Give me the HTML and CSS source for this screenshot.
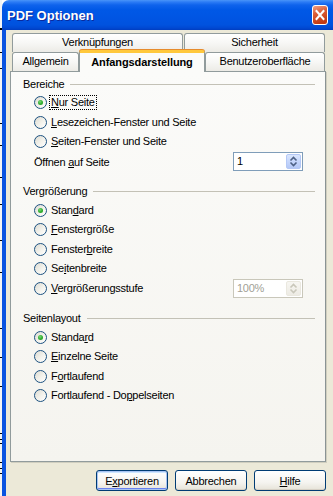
FILE: index.html
```html
<!DOCTYPE html>
<html lang="de">
<head>
<meta charset="utf-8">
<title>PDF Optionen</title>
<link rel="stylesheet" href="styles.css">
</head>
<body>
<div class="screen">
  <div class="backdrop"></div>
  <div class="window">
    <div class="titlebar">
      <span class="title">PDF Optionen</span>
      <span class="close">
        <svg width="16" height="20" viewBox="0 0 16 20">
          <defs>
            <linearGradient id="cg" x1="0" y1="0" x2="0.3" y2="1">
              <stop offset="0" stop-color="#F0A68C"/>
              <stop offset="0.45" stop-color="#DC5E38"/>
              <stop offset="1" stop-color="#C23A12"/>
            </linearGradient>
          </defs>
          <rect x="0.5" y="0.5" width="15" height="19" rx="2.5" fill="url(#cg)" stroke="#FFFFFF"/>
          <path d="M4.5 6 L11.5 14 M11.5 6 L4.5 14" stroke="#FFFFFF" stroke-width="2" stroke-linecap="square"/>
        </svg>
      </span>
    </div>
    <div class="frame">
      <div class="client">
        <div class="tabs">
          <div class="tabrow tabrow-top">
            <div class="tab tab-links">Verknüpfungen</div>
            <div class="tab tab-security">Sicherheit</div>
          </div>
          <div class="tabrow tabrow-bottom">
            <div class="tab tab-general">Allgemein</div>
            <div class="tab tab-initial active">Anfangsdarstellung</div>
            <div class="tab tab-ui">Benutzeroberfläche</div>
          </div>
        </div>
        <div class="panel">
          <div class="group">
            <div class="legend"><span>Bereiche</span><i class="rule"></i></div>
            <div class="row"><span class="radio on"></span><span class="label focus"><u>N</u>ur Seite</span></div>
            <div class="row"><span class="radio"></span><span class="label"><u>L</u>esezeichen-Fenster und Seite</span></div>
            <div class="row"><span class="radio"></span><span class="label"><u>S</u>eiten-Fenster und Seite</span></div>
            <div class="row row-field">
              <span class="plain">Öffnen <u>a</u>uf Seite</span>
              <span class="spin"><span class="spin-value">1</span><span class="spin-btn"><svg width="9" height="11" viewBox="0 0 9 11"><path d="M1.5 4.5 L4.5 1.5 L7.5 4.5 M1.5 6.5 L4.5 9.5 L7.5 6.5" fill="none" stroke="#4D6185" stroke-width="1.6"/></svg></span></span>
            </div>
          </div>
          <div class="group">
            <div class="legend"><span>Vergrößerung</span><i class="rule"></i></div>
            <div class="row"><span class="radio on"></span><span class="label">Stan<u>d</u>ard</span></div>
            <div class="row"><span class="radio"></span><span class="label"><u>F</u>enstergröße</span></div>
            <div class="row"><span class="radio"></span><span class="label">Fenster<u>b</u>reite</span></div>
            <div class="row"><span class="radio"></span><span class="label">Se<u>i</u>tenbreite</span></div>
            <div class="row row-field">
              <span class="radio"></span><span class="label"><u>V</u>ergrößerungsstufe</span>
              <span class="spin disabled"><span class="spin-value">100%</span><span class="spin-btn"><svg width="9" height="11" viewBox="0 0 9 11"><path d="M1.5 4.5 L4.5 1.5 L7.5 4.5 M1.5 6.5 L4.5 9.5 L7.5 6.5" fill="none" stroke="#C9C7BA" stroke-width="1.6"/></svg></span></span>
            </div>
          </div>
          <div class="group">
            <div class="legend"><span>Seitenlayout</span><i class="rule"></i></div>
            <div class="row"><span class="radio on"></span><span class="label">Standa<u>r</u>d</span></div>
            <div class="row"><span class="radio"></span><span class="label"><u>E</u>inzelne Seite</span></div>
            <div class="row"><span class="radio"></span><span class="label">F<u>o</u>rtlaufend</span></div>
            <div class="row"><span class="radio"></span><span class="label">Fortlaufend - Do<u>p</u>pelseiten</span></div>
          </div>
        </div>
        <div class="buttons">
          <button class="btn default">E<u>x</u>portieren</button>
          <button class="btn">Abbrechen</button>
          <button class="btn"><u>H</u>ilfe</button>
        </div>
      </div>
    </div>
  </div>
</div>
</body>
</html>
```
FILE: styles.css
```css
* { box-sizing: border-box; }
html, body { margin: 0; padding: 0; }
body {
  width: 333px;
  height: 496px;
  overflow: hidden;
  background: #FFFFFF;
  font-family: "Liberation Sans", Arial, sans-serif;
  font-size: 11px;
  letter-spacing: -0.25px;
  color: #000000;
}
u { text-decoration: underline; text-underline-offset: 1px; }

.screen {
  display: flex;
  width: 333px;
  height: 496px;
}
.backdrop {
  width: 2px;
  flex: none;
  background:
    linear-gradient(to bottom,
      transparent 28px, #000 28px, #000 30px, transparent 30px,
      transparent 52px, #000 52px, #000 53px, transparent 53px,
      transparent 68px, #000 68px, #000 69px, transparent 69px,
      transparent 123px, #000 123px, #000 124px, transparent 124px,
      transparent 145px, #000 145px, #000 146px, transparent 146px,
      transparent 177px, #000 177px, #000 178px, transparent 178px,
      transparent 204px, #000 204px, #000 205px, transparent 205px,
      transparent 240px, #000 240px, #000 241px, transparent 241px,
      transparent 272px, #000 272px, #000 273px, transparent 273px,
      transparent 328px, #000 328px, #000 329px, transparent 329px,
      transparent 357px, #000 357px, #000 358px, transparent 358px,
      transparent 386px, #000 386px, #000 387px, transparent 387px,
      transparent 433px, #000 433px, #000 434px, transparent 434px,
      transparent 439px, #000 439px, #000 440px, transparent 440px,
      transparent 443px, #000 443px, #000 444px, transparent 444px,
      transparent 462px, #000 462px, #000 463px, transparent 463px,
      transparent 468px, #000 468px, #000 469px, transparent 469px,
      transparent 473px, #000 473px, #000 474px, transparent 474px),
    #F4F4F4;
}
.window {
  flex: 1;
  display: flex;
  flex-direction: column;
  min-width: 0;
}
.titlebar {
  height: 30px;
  flex: none;
  display: flex;
  align-items: center;
  justify-content: space-between;
  padding: 0 5px 0 5px;
  border-radius: 7px 0 0 0;
  background: linear-gradient(to bottom,
    #4A95F8 0px, #2C7CF5 2px, #0F63EC 5px, #0058E6 10px,
    #0055E3 18px, #0052DE 25px, #0048D2 28px, #003DC0 30px);
}
.title {
  color: #FFFFFF;
  font-weight: bold;
  font-size: 13px;
  letter-spacing: 0;
  text-shadow: 1px 1px 0 #0A2A9C;
  padding-top: 1px;
}
.close {
  display: flex;
}
.frame {
  flex: 1;
  display: flex;
  border-left: 4px solid #0A53E0;
  box-shadow: inset 1px 0 0 #0831D9;
  min-height: 0;
}
.client {
  flex: 1;
  background: #ECE9D8;
  padding: 3px 7px 0 4px;
  display: flex;
  flex-direction: column;
}

/* tabs */
.tabs {
  margin-left: 2px;
  width: 313px;
}
.tabrow {
  display: flex;
  align-items: flex-end;
}
.tabrow-top { height: 19px; gap: 1px; }
.tabrow-bottom { height: 19px; }
.tab {
  height: 19px;
  border: 1px solid #919B9C;
  border-bottom: none;
  border-radius: 3px 3px 0 0;
  background: linear-gradient(to bottom, #FFFFFF 0%, #F7F7F5 50%, #ECEBE6 100%);
  text-align: center;
  line-height: 17px;
  white-space: nowrap;
}
.tab-links { width: 171px; }
.tab-security { width: 141px; }
.tab-general { width: 67px; }
.tab-initial { width: 126px; }
.tab-ui { width: 120px; }
.tab.active {
  height: 22px;
  margin-bottom: -1px;
  position: relative;
  z-index: 1;
  font-weight: bold;
  letter-spacing: -0.1px;
  background: #FBFBF9;
  border-top: 3px solid #FFC83C;
  box-shadow: 0 -1px 0 #E68B2C;
  line-height: 18px;
}

/* panel */
.panel {
  width: 316px;
  height: 391px;
  border: 1px solid #919B9C;
  border-right-color: #8A9394;
  box-shadow: 1px 1px 0 #D0CEBF;
  background: linear-gradient(to bottom, #FBFBF9 0%, #F5F4EF 100%);
  padding: 5px 10px 0 12px;
}
.group + .group { margin-top: 13px; }
.legend {
  height: 14px;
  line-height: 14px;
  display: flex;
  align-items: center;
  margin-bottom: 2px;
}
.rule {
  flex: 1;
  height: 1px;
  margin-left: 6px;
  background: #C3C1B6;
}
.row {
  height: 19.6px;
  display: flex;
  align-items: center;
  padding-left: 11px;
}
.radio {
  width: 13px;
  height: 13px;
  flex: none;
  border-radius: 50%;
  border: 1px solid #1C5180;
  background: linear-gradient(135deg, #DCDBD2 0%, #F3F2EC 55%, #FFFFFF 100%);
  display: flex;
  align-items: center;
  justify-content: center;
}
.radio.on::after {
  content: "";
  width: 5px;
  height: 5px;
  border-radius: 50%;
  background: radial-gradient(circle at 40% 35%, #7BD57B 0%, #30B030 50%, #1E901E 100%);
}
.label {
  margin-left: 4px;
  line-height: 13px;
  white-space: nowrap;
}
.label.focus {
  margin-left: 2px;
  border: 1px dotted #000000;
  padding: 0 1px;
}
.plain { white-space: nowrap; }
.spin {
  margin-left: auto;
  margin-right: 12px;
  width: 70px;
  height: 19px;
  border: 1px solid #7F9DB9;
  background: #FFFFFF;
  display: flex;
  align-items: center;
  justify-content: space-between;
  padding: 1px 1px 1px 3px;
}
.spin-value { line-height: 15px; }
.spin-btn {
  width: 15px;
  height: 15px;
  border-radius: 2px;
  border: 1px solid #B4C8F6;
  background: linear-gradient(to bottom, #DAE6FD 0%, #C5D6FC 50%, #B4C8F6 100%);
  display: flex;
  align-items: center;
  justify-content: center;
}
.spin.disabled {
  border-color: #C9C7BA;
  color: #A19F96;
}
.spin.disabled .spin-btn {
  border-color: #EAE8DF;
  background: linear-gradient(to bottom, #F7F6F2, #EDEBE4);
}

/* buttons */
.buttons {
  display: flex;
  justify-content: flex-end;
  gap: 7px;
  margin-top: 8px;
}
.btn {
  width: 72px;
  height: 21px;
  padding: 0;
  font-family: "Liberation Sans", Arial, sans-serif;
  font-size: 11px;
  letter-spacing: -0.25px;
  color: #000000;
  border: 1px solid #003C74;
  border-radius: 3px;
  background: linear-gradient(to bottom, #FFFFFF 0%, #F5F4F0 60%, #E6E3D8 100%);
  box-shadow: inset 0 -1px 0 #D6D0C5;
}
.btn.default {
  box-shadow: inset 0 0 0 1px #A8C3F3, inset 0 -2px 0 #6982EE, inset 0 2px 0 #CEE7FF;
}
```
